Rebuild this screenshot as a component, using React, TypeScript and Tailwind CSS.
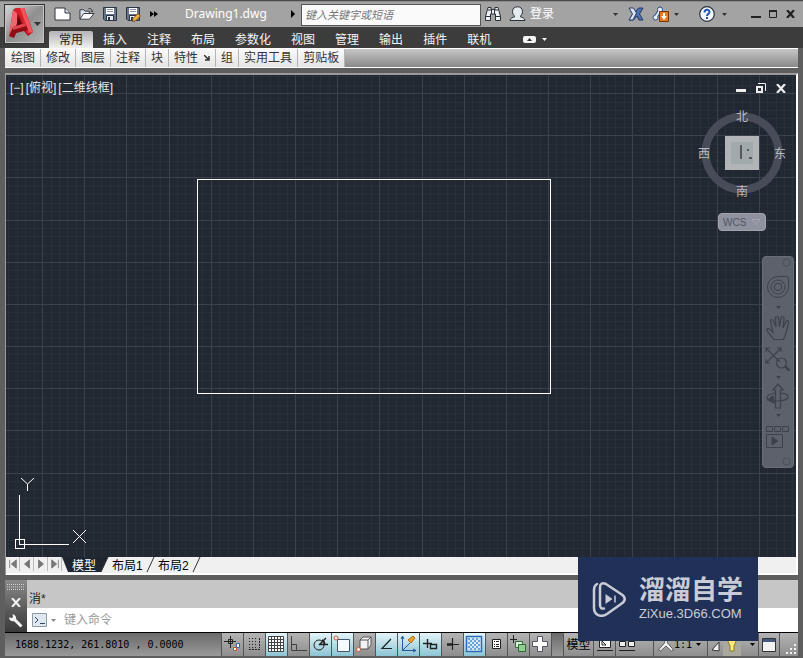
import type { ReactNode } from "react";
import clsx from "clsx";

const TABS = ["插入", "注释", "布局", "参数化", "视图", "管理", "输出", "插件", "联机"];
const PANELS = ["绘图", "修改", "图层", "注释", "块", "特性", "组", "实用工具", "剪贴板"];

function Caret({ className }: { className?: string }) {
  return (
    <svg viewBox="0 0 5 3" className={clsx("w-[5px] h-[3px]", className)} fill="currentColor">
      <path d="M0 0h5L2.5 3z" />
    </svg>
  );
}

function IconButton({ label, className, children }: { label: string; className?: string; children: ReactNode }) {
  return (
    <button aria-label={label} className={clsx("flex items-center justify-center shrink-0", className)}>
      {children}
    </button>
  );
}

function AppButton() {
  return (
    <button
      aria-label="应用程序菜单"
      className="absolute left-1 top-1 z-10 w-[41px] h-10 border border-[#333] bg-linear-to-br from-[#d8d8d8] via-[#8f8f8f] to-[#b5b5b5] shadow-[inset_0_0_0_1px_#c4c4c4]"
    >
      <svg viewBox="0 0 39 38" className="w-full h-full">
        <path d="M4 31 8 5l3-2h8l9 24-5 4-5-6-7 3-2 4z" fill="#b3121c" />
        <path d="M4 31 8 5l4-1v14L9 31z" fill="#f0686f" />
        <path d="m8 5 3-2h8l9 24-6 2-7-18z" fill="#d8202b" />
        <path d="m15 3h4l9 24-4 1z" fill="#f2525a" />
        <path d="m13 11 4.500 9-6 2z" fill="#5c070d" />
        <path d="m4 31 4-9 12-4 3 7-12 3-2 5z" fill="#8f0d15" />
        <path d="m8 22 12-4 1 3-13 4z" fill="#e0444c" />
        <path d="M29 17h7l-3.500 4z" fill="#333" />
      </svg>
    </button>
  );
}

function SaveIcon({ pencil }: { pencil?: boolean }) {
  return (
    <svg viewBox="0 0 16 16" className="w-4 h-4">
      <path d="M1.500 1.500h13v13H3l-1.500-1.500z" fill="#66758c" stroke="#2b3442" />
      <path d="M4 2h8v6H4z" fill="#fff" />
      <path d="M5 3.500h6M5 5.500h6" stroke="#8a94a3" />
      <path d="M4.500 9.500h7v5h-7z" fill="#e8ecf2" stroke="#2b3442" />
      <path d="M6 11h2v3H6z" fill="#2b3442" />
      {pencil && <path d="m8 12.500 5-5 2.500 2.500-5 5-3 .5z" fill="#f0b040" stroke="#6b4310" strokeWidth=".8" />}
    </svg>
  );
}

function TitleBar() {
  return (
    <header className="flex items-center h-[27px] border-t border-[#4a4a4a] bg-[#a3a3a3] pl-[52px] pr-2 shadow-[inset_0_1px_0_#8a8a8a]">
      <div className="flex items-center gap-[7px]">
        <IconButton label="新建" className="w-5">
          <svg viewBox="0 0 17 14" className="w-[17px] h-3.5">
            <path d="M1 1h10l5 5v7H1z" fill="#fff" stroke="#30353d" />
            <path d="M11 1v5h5" fill="#d6dbe2" stroke="#30353d" />
          </svg>
        </IconButton>
        <IconButton label="打开" className="w-4">
          <svg viewBox="0 0 17 14" className="w-[17px] h-3.5">
            <path d="M1 12.500V2.500h4l1.500 1.500H11v3" fill="#dde2ea" stroke="#30353d" />
            <path d="M1 12.500 5 6.500h11l-5 6z" fill="#fff" stroke="#30353d" />
            <path d="M10 1.500c2-1 3.500 0 4 2" fill="none" stroke="#30353d" />
            <path d="M12.500 3.500h3L14 5.500z" fill="#30353d" />
          </svg>
        </IconButton>
        <IconButton label="保存" className="w-4"><SaveIcon /></IconButton>
        <IconButton label="另存为" className="w-4"><SaveIcon pencil /></IconButton>
        <IconButton label="更多" className="w-3">
          <svg viewBox="0 0 8 6" className="w-2 h-1.5"><path d="M0 0l4 3-4 3zM4 0l4 3-4 3z" /></svg>
        </IconButton>
      </div>
      <h1 className="ml-[25px] w-[106px] font-['Noto_Sans'] text-[12px] text-white">Drawing1.dwg</h1>
      <svg viewBox="0 0 4 8" className="w-1 h-2 mr-[6px]"><path d="M0 0l4 4-4 4z" /></svg>
      <input
        aria-label="搜索"
        placeholder="键入关键字或短语"
        className="w-[180px] h-[22px] mt-px px-[3px] border border-[#555] bg-[#fafafa] italic text-[11px] placeholder:text-[#777]"
      />
      <IconButton label="查找" className="w-4 ml-1">
        <svg viewBox="0 0 16 16" className="w-4 h-4" fill="#eef1f5" stroke="#2b3038">
          <path d="M3 1.500h3v2h4v-2h3l2.500 9v4h-5V8h-5v6.500h-5v-4z" />
          <path d="M.5 10.500h5M10.500 10.500h5M6.500 3v5M9.500 3v5M3 4h3M10 4h3" />
        </svg>
      </IconButton>
      <button className="flex items-center gap-1 ml-2 text-[12px] text-white">
        <svg viewBox="0 0 17 16" className="w-[17px] h-4" fill="#e6eaf1" stroke="#2b3038">
          <path d="M1 14.500c0-2.500 3-3 5-4-1.500-1-2.500-3-2.500-5C3.500 2.500 5.500.8 8.500.8s5 1.700 5 4.700c0 2-1 4-2.500 5 2 1 5 1.500 5 4z" />
        </svg>
        登录
      </button>
      <div className="flex items-center ml-auto text-[#333]">
        <Caret />
        <IconButton label="Exchange" className="w-4 ml-2.5">
          <svg viewBox="0 0 16 14" className="w-4 h-3.5" stroke="#233a6b">
            <path d="M15 1h-4.500L1 13h4.500L9 9l2 4h4l-3.500-6z" fill="#4d70b0" />
            <path d="M1 1h4.500l3 5-1 2L5 13H1l3.500-6z" fill="#dbe5f4" />
          </svg>
        </IconButton>
        <IconButton label="应用更新" className="w-[18px] ml-2">
          <svg viewBox="0 0 18 16" className="w-[18px] h-4">
            <path d="M3.500 11.500 8 4l5 7" fill="none" stroke="#2e4e8c" strokeWidth="4" />
            <circle cx="8" cy="3.500" r="2.500" fill="#e4ebf6" stroke="#2e4e8c" />
            <circle cx="3.500" cy="11.500" r="2.500" fill="#e4ebf6" stroke="#2e4e8c" />
            <path d="M3.500 11.500 8 4l5 7" fill="none" stroke="#e4ebf6" strokeWidth="2" />
            <path d="M7.500 5.500h9v10h-9z" fill="#e87a1c" stroke="#7a3505" />
            <path d="M11 7h2v3h2l-3 4-3-4h2z" fill="#fff" />
          </svg>
        </IconButton>
        <Caret className="ml-1" />
        <IconButton label="帮助" className="w-4 ml-5">
          <svg viewBox="0 0 16 16" className="w-4 h-4">
            <circle cx="8" cy="8" r="7.300" fill="#f4f8fc" stroke="#2a303a" strokeWidth="1.200" />
            <path d="M5.500 6.500C5.500 3 10.500 3 10.500 6c0 1.800-2.500 2-2.500 4" fill="none" stroke="#2458b0" strokeWidth="2" />
            <path d="M7 11h2v2H7z" fill="#2458b0" />
          </svg>
        </IconButton>
        <Caret className="ml-[7px]" />
        <IconButton label="最小化" className="w-[10px] ml-6">
          <svg viewBox="0 0 10 10" className="w-2.5 h-2.5"><path d="M0 7h10v2H0z" fill="#222" /></svg>
        </IconButton>
        <IconButton label="最大化" className="w-2 ml-2">
          <svg viewBox="0 0 8 8" className="w-2 h-2"><path d="M.5 1h7v6.500h-7z" fill="none" stroke="#222" /><path d="M0 0h8v2H0z" fill="#222" /></svg>
        </IconButton>
        <IconButton label="关闭" className="w-2.5 ml-2">
          <svg viewBox="0 0 9 8" className="w-[9px] h-2"><path d="m1 0 7 8M8 0 1 8" stroke="#222" strokeWidth="2.200" /></svg>
        </IconButton>
      </div>
    </header>
  );
}

function Ribbon() {
  return (
    <>
      <nav className="flex items-end h-[21px] pl-[49px] bg-[#3c3c3c] text-[12px] leading-[18px] text-[#f4f4f4]">
        <button className="h-[17px] px-2.5 rounded-t-xs bg-linear-to-b from-[#b4b4b4] to-[#f0f0f0] text-[#222]">常用</button>
        {TABS.map((tab) => (
          <button key={tab} className="h-[17px] px-2.5">{tab}</button>
        ))}
        <button aria-label="最小化功能区" className="flex items-center gap-1 h-[18px] ml-[22px]">
          <svg viewBox="0 0 13 7" className="w-[13px] h-[7px]">
            <rect width="13" height="7" rx="2" fill="#f4f4f4" />
            <path d="M4 5h5L6.500 2z" fill="#333" />
          </svg>
          <Caret className="ml-0.5" />
        </button>
      </nav>
      <div className="flex h-5 mx-[5px] border-y border-white bg-linear-to-b from-[#c6c6c6] to-[#8a8a8a] text-[12px] leading-5 text-[#333]">
        {PANELS.map((panel) => (
          <button
            key={panel}
            className="flex items-center px-[5px] border-r border-[#b4b4b4] bg-linear-to-b from-[#fafafa] to-[#e4e4e4] first:pl-1.5"
          >
            {panel}
            {panel === "特性" && (
              <svg viewBox="0 0 6 6" className="w-1.5 h-1.5 ml-1.5">
                <path d="M0 0l4 4M5 1v4H1" stroke="#333" strokeWidth="1.500" fill="none" />
              </svg>
            )}
          </button>
        ))}
      </div>
    </>
  );
}

const STEPS = Array.from({ length: 300 }, (_, i) => i);

// Every fifth line is a major one
function Grid() {
  const x = (i: number) => Math.round(i * 8.43 - 6) + 0.5;
  const y = (i: number) => Math.round(i * 8.43 - 24) + 0.5;
  return (
    <g shapeRendering="crispEdges">
      {STEPS.map((i) => (
        <path key={i} d={`M${x(i)} 0V3000M0 ${y(i)}H3000`} stroke="#272f39" />
      ))}
      {STEPS.filter((i) => i % 5 === 0).map((i) => (
        <path key={i} d={`M${x(i)} 0V3000M0 ${y(i)}H3000`} stroke="#39414b" />
      ))}
    </g>
  );
}

function ViewCube() {
  return (
    <svg viewBox="0 0 92 92" className="w-[92px] h-[92px] font-['Noto_Sans_CJK_SC',sans-serif]">
      <circle cx="46" cy="46" r="36.500" fill="none" stroke="#474c58" strokeWidth="8" />
      <rect x="29" y="29" width="34" height="34" fill="#b2b5b7" />
      <rect x="35" y="35" width="22" height="22" fill="#a2a9ad" />
      <path d="M45 38v14M51 43h2M53 51h3" stroke="#3a3f45" strokeWidth="1.500" />
      <g fill="#b8bbbf" fontSize="12" textAnchor="middle">
        <text x="46" y="14">北</text>
        <text x="46" y="89">南</text>
        <text x="8" y="51">西</text>
        <text x="84" y="51">东</text>
      </g>
    </svg>
  );
}

function NavBar() {
  const arrow = <Caret className="text-[#3c414b]" />;
  const dot = <circle cx="4.500" cy="4.500" r="3.500" fill="none" stroke="#4a4f59" />;
  return (
    <div className="absolute right-[2px] top-[181px] w-8 rounded-sm bg-[#5c616b] border border-[#686d77]">
      <IconButton label="选项" className="ml-auto mr-0.5 h-2.5 w-2.5"><svg viewBox="0 0 9 9" className="w-[9px] h-[9px]">{dot}</svg></IconButton>
      <IconButton label="控制盘" className="mt-1 h-8 w-full">
        <svg viewBox="0 0 22 22" className="w-[22px] h-[22px]" fill="none" stroke="#3c414b">
          <path d="M11 .5h8c1.500 0 2.500 1 2.500 2.500v8A10.500 10.500 0 1 1 11 .5z" />
          <circle cx="11" cy="11" r="7" />
          <rect x="7.500" y="7.500" width="7" height="7" rx="2.500" />
        </svg>
      </IconButton>
      <IconButton label="控制盘菜单" className="h-2 w-full">{arrow}</IconButton>
      <IconButton label="平移" className="h-[34px] w-full">
        <svg viewBox="0 0 24 26" className="w-6 h-[26px]" fill="none" stroke="#3c414b" strokeWidth="1.200">
          <path d="M8 24.500c-2-3-5-5-7-9-.5-2 1.500-2.500 3-1l3 3L4.500 6c0-2 2.500-2 3 0L10 12 9.500 3c0-2 3-2 3 0l1 9 1.500-9c.5-2 3-1.500 3 .5L17 13l3-6.500c1-1.500 3-.5 2.500 1.500-1 4-1.500 8-3 11.500-.5 2-2 3-2 5z" />
        </svg>
      </IconButton>
      <IconButton label="范围缩放" className="h-7 w-full">
        <svg viewBox="0 0 26 25" className="w-[26px] h-[25px]" fill="none" stroke="#3c414b" strokeWidth="1.200">
          <path d="M1 1l14 14M16 1 1 16M1 5V1h4M12 1h4v4M1 12v4h4" />
          <circle cx="16.500" cy="16" r="5" />
          <path d="m20 19.500 4.500 4" strokeWidth="2.500" />
        </svg>
      </IconButton>
      <IconButton label="缩放菜单" className="h-2 w-full">{arrow}</IconButton>
      <IconButton label="动态观察" className="h-[30px] w-full">
        <svg viewBox="0 0 24 26" className="w-6 h-[26px]" fill="none" stroke="#3c414b" strokeWidth="1.200">
          <path d="M9.500 25V7H7l5-6 5 6h-2.500v18z" />
          <path d="M9 10c-5 1-8 3-8 5s4 3 9 3 12-1 12-4-3-3-7-4" />
          <path d="m7 13-5 4 6 3z" fill="#3c414b" />
        </svg>
      </IconButton>
      <IconButton label="动态观察菜单" className="h-2 w-full">{arrow}</IconButton>
      <IconButton label="ShowMotion" className="h-9 w-full">
        <svg viewBox="0 0 24 24" className="w-6 h-6" fill="none" stroke="#3c414b">
          <path d="M.5 1.500h6v5h-6zM8.500 1.500h6v5h-6zM16.500 1.500h6v5h-6zM.5 9.500h16v13H.5z" />
          <path d="m6 12 6 4-6 4z" fill="#3c414b" />
        </svg>
      </IconButton>
      <IconButton label="关闭导航栏" className="ml-auto mr-0.5 h-3 w-2.5"><svg viewBox="0 0 9 9" className="w-[9px] h-[9px]">{dot}</svg></IconButton>
    </div>
  );
}

function Canvas() {
  return (
    <main className="relative flex-1 min-h-0 overflow-hidden bg-[#212832]">
      <svg className="absolute inset-0 w-full h-full">
        <Grid />
        <rect x="191.500" y="104.500" width="353" height="214" fill="none" stroke="#fff" />
      </svg>
      <svg viewBox="0 0 80 76" className="absolute left-2 bottom-1.5 w-20 h-[76px]" fill="none" stroke="#fff">
        <path d="M1.500 64.500h9v9h-9zM5.500 69V20M5 69.500h50" shapeRendering="crispEdges" />
        <path d="m7 3 6.500 6L20 3M13.500 9v7M59 55l13 13M72 55 59 68" />
      </svg>
      <div className="relative flex items-start justify-between pl-1 pr-2.5 pt-1 text-[12px] leading-[18px] text-[#e8e8e8]">
        <div className="flex gap-[2px]">
          <button>[−]</button>
          <button>[俯视]</button>
          <button>[二维线框]</button>
        </div>
        <div className="flex items-center gap-2.5 pt-1">
          <IconButton label="最小化视口">
            <svg viewBox="0 0 10 10" className="w-2.5 h-2.5"><path d="M0 6h10v3H0z" fill="#eee" /></svg>
          </IconButton>
          <IconButton label="还原视口">
            <svg viewBox="0 0 10 10" className="w-2.5 h-2.5" fill="none" stroke="#eee">
              <path d="M1 4h5v5H1z" strokeWidth="2" />
              <path d="M2 .5h7.500V8" />
            </svg>
          </IconButton>
          <IconButton label="关闭视口">
            <svg viewBox="0 0 10 9" className="w-2.5 h-[9px]"><path d="m1 0 8 9M9 0 1 9" stroke="#eee" strokeWidth="2.200" /></svg>
          </IconButton>
        </div>
      </div>
      <div className="absolute right-2 top-8 flex flex-col items-center">
        <ViewCube />
        <button className="flex items-center gap-1.5 mt-3.5 w-12 h-[18px] pl-1 rounded-sm border border-[#a2a4ae] bg-[#8e919e] text-[10px] text-[#525665]">
          WCS
          <svg viewBox="0 0 8 6" className="w-2 h-1.5" fill="none" stroke="#a2a5b0"><path d="M0 .5h8L4 5.500z" /></svg>
        </button>
      </div>
      <NavBar />
    </main>
  );
}

function LayoutTabs() {
  const arrows = ["M2 1v10M10 1v10L4 6z", "M9 1v10L3 6z", "M3 1v10l6-5z", "M10 1v10M2 1v10l6-5z"];
  return (
    <div className="flex h-[18px] pb-[2px] border-b-2 border-white bg-[#f0f0f0] text-[12px] leading-[18px] text-black">
      {arrows.map((d) => (
        <IconButton key={d} label="滚动布局" className="w-3.5 border-r border-[#bbb]">
          <svg viewBox="0 0 12 12" className="w-2.5 h-2.5" fill="#777" stroke="#777"><path d={d} /></svg>
        </IconButton>
      ))}
      <div className="relative flex">
        <svg viewBox="0 0 140 15" className="absolute left-0 top-0 w-[140px] h-[15px]">
          <path d="M0 0h46l-7 15H6z" fill="#1f2630" />
          <path d="M46 0l-7 15M92 0l-7 15M138 0l-7 15" stroke="#333" fill="none" />
        </svg>
        <button className="relative w-[46px] pl-2.5 text-left text-white">模型</button>
        <button className="relative w-[46px] pl-1 text-left">布局1</button>
        <button className="relative w-[46px] pl-1 text-left">布局2</button>
      </div>
    </div>
  );
}

function CommandLine() {
  return (
    <section className="flex mt-[5px] border-b border-black bg-white text-[12px]">
      <div className="flex flex-col items-center justify-between w-[22px] py-1 bg-linear-to-b from-[#8a8a8a] to-[#3a3a3a]">
        <svg viewBox="0 0 18 6" className="w-[18px] h-1.5" stroke="#d0d0d0" strokeDasharray="1 1"><path d="M0 .5h18M0 3h18M0 5.500h18" /></svg>
        <IconButton label="关闭命令行">
          <svg viewBox="0 0 10 9" className="w-2.5 h-[9px]"><path d="m1 0 8 9M9 0 1 9" stroke="#f4f4f4" strokeWidth="2" /></svg>
        </IconButton>
        <IconButton label="自定义">
          <svg viewBox="0 0 14 14" className="w-3.5 h-3.5">
            <path d="M5 5l7.500 7.500" stroke="#f4f4f4" strokeWidth="3" />
            <path d="M3.500 0l.5 3-1 1-3-.5C0 6.500 3 8 5.500 7S8 1.500 3.500 0z" fill="#f4f4f4" />
          </svg>
        </IconButton>
      </div>
      <div className="flex-1">
        <p className="h-7 pt-2 pl-0.5 bg-[#c6c6c6] leading-[22px] text-[#222]">消*</p>
        <label className="flex items-center h-6 pl-[5px]">
          <svg viewBox="0 0 15 14" className="w-[15px] h-3.5" fill="none" stroke="#8c9aa8">
            <path d="M.5.5h14v13H.5z" fill="#dfe8ee" />
            <path d="m3 4 3 3-3 3M8 10.500h5" stroke="#33475b" />
          </svg>
          <Caret className="ml-1 text-[#888]" />
          <input aria-label="命令" placeholder="键入命令" className="flex-1 pl-2 placeholder:text-[#9a9a9a]" />
        </label>
      </div>
    </section>
  );
}

const TOGGLES: { label: string; on?: boolean; icon: ReactNode }[] = [
  { label: "推断约束", icon: <><path d="M7.500 1v12M1 6.500h12M5.500 4.500h4v4h-4z" /><path d="M13.500 8.500h3v4h-3z" stroke="#3a62a8" fill="#fff" /><path d="M10.500 12.500h3v3h-3z" stroke="#c0502c" fill="#fff" /></> },
  { label: "捕捉模式", icon: <><path d="M4 3.500h9M4 6.500h9M4 9.500h9M4 12.500h9" strokeDasharray="1 2" /><path d="M14.500 3v10" strokeDasharray="2 1" /><path d="M4 14.500h11" strokeDasharray="2 1" /></> },
  { label: "栅格显示", on: true, icon: <path d="M1.500 1.500h15v15h-15zM4.500 2v14M7.500 2v14M10.500 2v14M13.500 2v14M2 4.500h14M2 7.500h14M2 10.500h14M2 13.500h14" fill="#fff" stroke="#444" /> },
  { label: "正交模式", icon: <path d="M2.500 1v14.500H18M2.500 9.500h5v6" stroke="#444" /> },
  { label: "极轴追踪", on: true, icon: <><circle cx="8" cy="10" r="5" /><path d="M8 10l7-7M8 9.500h9M11 5c2 1 3 3 2.500 5" strokeWidth="1.400" /></> },
  { label: "对象捕捉", on: true, icon: <><path d="M4.500 4.500h12v12h-12z" fill="#f6fafc" stroke="#456" /><circle cx="3" cy="3" r="2" stroke="#d4572a" fill="#fff" /></> },
  { label: "三维对象捕捉", icon: <><path d="M5 5l3-3h8v8l-3 4H5zM5 5h8v9M13 5l3-3" fill="#f4f4f4" stroke="#555" /><circle cx="3.500" cy="14.500" r="2" stroke="#d4572a" fill="#fff" /></> },
  { label: "对象捕捉追踪", on: true, icon: <path d="M14 4 5 13.500h10" strokeWidth="1.200" /> },
  { label: "动态 UCS", on: true, icon: <><path d="M3.500 1v14.500H17M3.500 15.500l8-8M2 4l1.500-3L5 4M14 14l3 1.500-3 1.500" stroke="#235a9c" /><path d="m9 5 5-4 2 2-4 5z" fill="#f0a030" stroke="#b06a10" /></> },
  { label: "动态输入", on: true, icon: <path d="M6.500 4v9M2 8.500h9M9.500 9.500h6v4h-6z" strokeWidth="1.400" /> },
  { label: "线宽", icon: <><path d="M9.500 3v12" strokeWidth="1.200" /><path d="M4 9.500h5.500" strokeWidth="2.500" /><path d="M9.500 9.500H16" /></> },
  { label: "透明度", on: true, icon: <><path d="M1.500 1.500h15v15h-15z" fill="#d4e8f8" stroke="#2a6cb8" strokeWidth="1.500" /><path d="M3 4h12M3 8h12M3 12h12" stroke="#6ba3da" strokeWidth="2" strokeDasharray="2 2" /><path d="M5 6h10M5 10h10M5 14h10" stroke="#6ba3da" strokeWidth="2" strokeDasharray="2 2" /></> },
  { label: "快捷特性", icon: <><path d="M5.500 4.500h8v9h-8z" fill="#fff" /><path d="M7 6.500h1M9 6.500h3M7 9.500h1M9 9.500h3M7 11.500h1M9 11.500h3" /></> },
  { label: "选择循环", icon: <><path d="M4.500 0v8M1 4.500h7" /><path d="M6.500 6.500h7v6h-7z" fill="#dcefdc" stroke="#2f6d34" /><path d="M9.500 9.500h7v7h-7z" fill="#8fd092" stroke="#2f6d34" /></> },
  { label: "注释监视器", icon: <path d="M6.500 1.500h5v5h5v5h-5v5h-5v-5h-5v-5h5z" fill="#fafafa" stroke="#556" /> },
];

// Divider shared by every cell on the status bar
const CELL = "flex items-center justify-center shrink-0 h-full border-l border-[#555]";

function StatusBar() {
  return (
    <footer className="flex items-center h-[23px] mb-[2px] bg-linear-to-b from-[#6a6a6a] to-[#9a9a9a] text-black">
      <p className="w-[216px] shrink-0 pl-2.5 whitespace-pre font-['DejaVu_Sans_Mono',monospace] text-[10px]">1688.1232, 261.8010 , 0.0000</p>
      {TOGGLES.map(({ label, on, icon }) => (
        <button
          key={label}
          aria-label={label}
          aria-pressed={!!on}
          className={clsx(
            CELL,
            "w-[22px] pb-[2px] bg-linear-to-b",
            on ? "from-[#e4f5f9] to-[#8cc4d4]" : "from-[#b4b4b4] to-[#8e8e8e]"
          )}
        >
          <svg viewBox="0 0 19 18" className="w-[19px] h-[18px]" fill="none" stroke="#222">{icon}</svg>
        </button>
      ))}
      <div className="w-3 h-full shrink-0 border-l border-[#555]" />
      <div className="flex h-full flex-1 bg-linear-to-b from-[#b4b4b4] to-[#8e8e8e]">
        <button className={clsx(CELL, "w-[30px] text-[12px]")}>模型</button>
        <IconButton label="快速查看布局" className="w-[22px] border-l border-[#555]">
          <svg viewBox="0 0 16 14" className="w-4 h-3.5" fill="none" stroke="#222"><path d="M2.500.5h11v9h-11z" fill="#fff" /><path d="M5 7V3l4 4zM0 12.500h16" /></svg>
        </IconButton>
        <IconButton label="快速查看图形" className="w-[22px] border-l border-[#555]">
          <svg viewBox="0 0 16 14" className="w-4 h-3.5" fill="none" stroke="#222"><path d="M.5 3.500h6v5h-6zM9.500 3.500h6v5h-6z" fill="#eee" /><path d="M0 12.500h16" /></svg>
        </IconButton>
        <button className="flex items-center h-full ml-4 pl-1 border-l border-[#555] font-['DejaVu_Sans_Mono',monospace] text-[10px]">
          <svg viewBox="0 0 16 14" className="w-4 h-3.5"><path d="M7 0h2l.5 5 6 7-2 1L8 8l-5.500 5-2-1 6-7z" fill="#f4f4f4" stroke="#333" strokeWidth=".7" /></svg>
          1:1
          <Caret className="ml-1" />
        </button>
        <IconButton label="注释可见性" className="w-4 ml-1.5 border-l border-[#555]">
          <svg viewBox="0 0 10 14" className="w-2.5 h-3.5"><path d="m1 12 7-8v9z" fill="#f4f4f4" stroke="#333" /></svg>
        </IconButton>
        <IconButton label="自动缩放" className="w-[18px] bg-[#a9a9a0]">
          <svg viewBox="0 0 12 14" className="w-3 h-3.5" stroke="#8a7a20"><path d="M1 1h10l-3 7v5H4V8z" fill="#ffe97a" /></svg>
        </IconButton>
        <div className="flex ml-auto h-full">
          <IconButton label="状态栏菜单" className="w-3"><Caret /></IconButton>
          <IconButton label="全屏显示" className="w-[22px] border-x border-[#555]">
            <svg viewBox="0 0 14 14" className="w-3.5 h-3.5"><path d="M.5.5h13v13H.5z" fill="#f2f2f2" stroke="#333" /><path d="M1 1h12v3H1z" fill="#445a80" /></svg>
          </IconButton>
          <svg viewBox="0 0 14 14" className="self-end w-3.5 h-3.5 ml-1" fill="#f4f4f4">
            <path d="M10 2h2v2h-2zM6 6h2v2H6zM10 6h2v2h-2zM2 10h2v2H2zM6 10h2v2H6zM10 10h2v2h-2z" />
          </svg>
        </div>
      </div>
    </footer>
  );
}

function Watermark() {
  return (
    <div className="absolute right-[45px] bottom-[17px] z-20 flex items-center gap-3 w-[180px] h-[84px] pl-3.5 bg-[#203057] text-[#c9ccd6]">
      <svg viewBox="0 0 35 36" className="w-[35px] h-9 shrink-0" fill="none" stroke="currentColor" strokeWidth="2.500" strokeLinecap="round">
        <path d="M8 24V6c0-3.500 2.500-4.500 6-3l15 10c5 3 5 7 0 10L15 33c-6 4-13 1-13-6V9c0-3 1-5 3-6" />
        <path d="M8 24c0 3 1.500 4 4 3.500" />
        <path d="m13.500 13 7 5-7 5z" fill="currentColor" stroke="none" />
        <path d="M23 15v6" strokeWidth="1.500" />
      </svg>
      <div className="pb-0.5">
        <p className="text-[26px] leading-8 font-bold whitespace-nowrap">溜溜自学</p>
        <p className="text-[13px] leading-4 whitespace-nowrap">ZiXue.3D66.COM</p>
      </div>
    </div>
  );
}

export default function App() {
  return (
    <div className="relative flex flex-col h-screen overflow-hidden bg-[#5e5e5e] font-['Liberation_Sans','Noto_Sans_CJK_SC',sans-serif]">
      <AppButton />
      <TitleBar />
      <Ribbon />
      <div className="flex flex-col flex-1 min-h-0 mx-[5px] mt-[5px] border-t-2 border-l border-r-2 border-t-[#9a9a9a] border-l-[#9a9a9a] border-r-white">
        <Canvas />
        <LayoutTabs />
      </div>
      <div className="mx-[5px]">
        <CommandLine />
        <StatusBar />
      </div>
      <Watermark />
    </div>
  );
}
